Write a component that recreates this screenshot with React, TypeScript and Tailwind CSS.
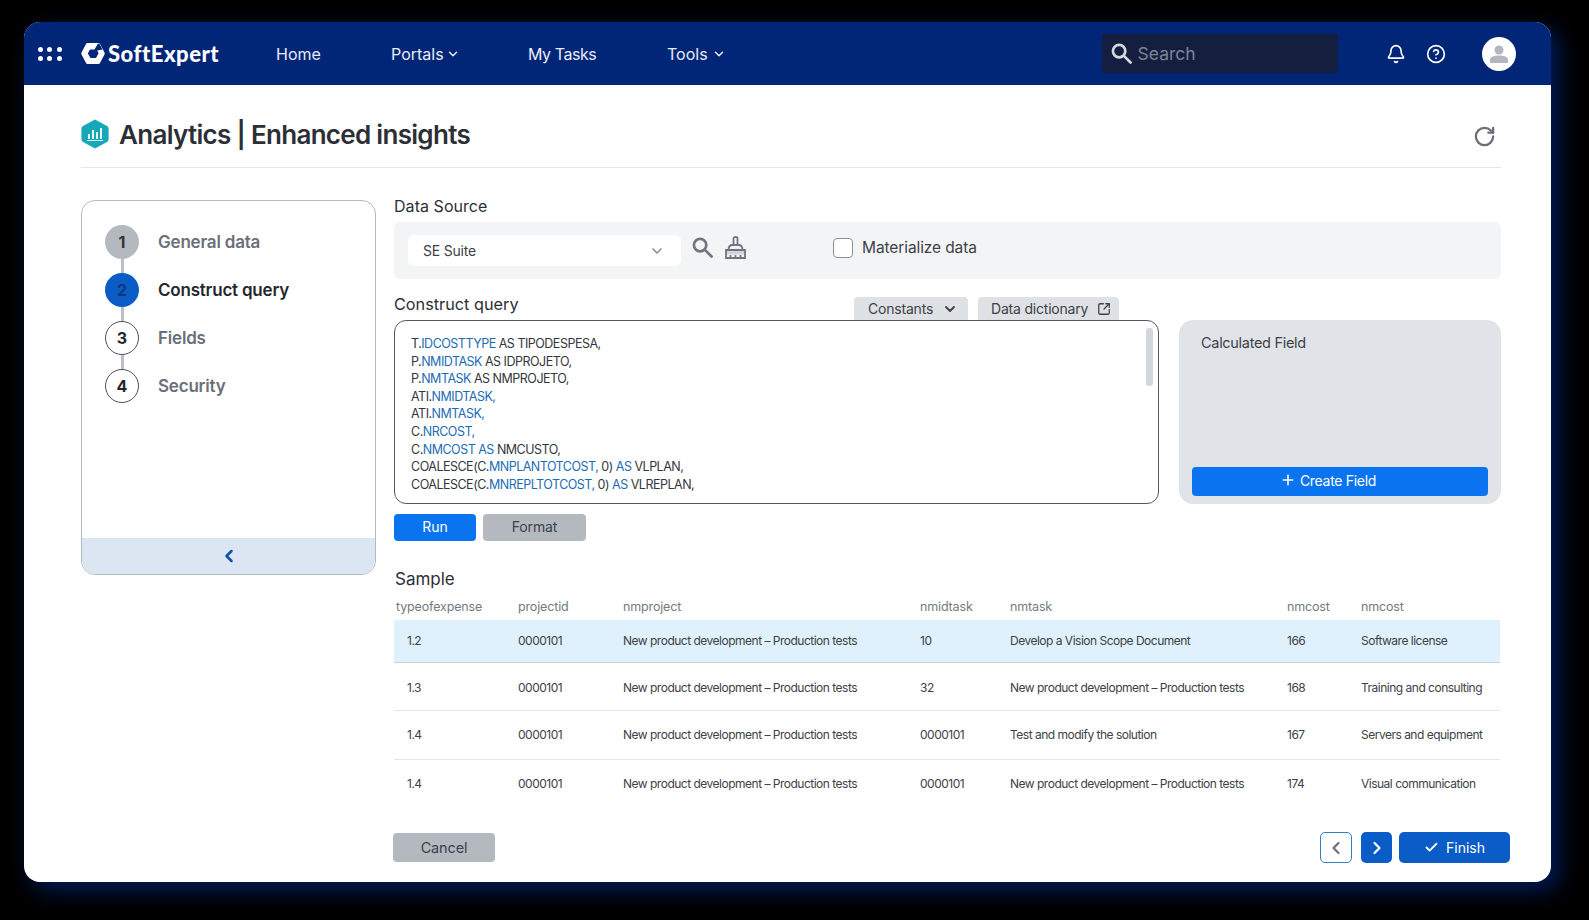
import { Bell, Check, ChevronDown, ChevronLeft, ChevronRight, CircleHelp, Plus, RotateCw, SquareArrowOutUpRight } from "lucide-react";

const steps = [
  { n: "1", label: "General data", circle: "bg-[#b4b9c0] text-[#2f343b]", text: "text-[#6b7078]" },
  { n: "2", label: "Construct query", circle: "bg-[#0a5cc6] text-[#0b3a80]", text: "text-[#24282e]" },
  { n: "3", label: "Fields", circle: "bg-white border border-[#4b5058] text-[#24282e]", text: "text-[#6b7078]" },
  { n: "4", label: "Security", circle: "bg-white border border-[#4b5058] text-[#24282e]", text: "text-[#6b7078]" },
];

const rows = [
  ["1.2", "0000101", "New product development – Production tests", "10", "Develop a Vision Scope Document", "166", "Software license"],
  ["1.3", "0000101", "New product development – Production tests", "32", "New product development – Production tests", "168", "Training and consulting"],
  ["1.4", "0000101", "New product development – Production tests", "0000101", "Test and modify the solution", "167", "Servers and equipment"],
  ["1.4", "0000101", "New product development – Production tests", "0000101", "New product development – Production tests", "174", "Visual communication"],
];

const rowStyles = [
  "h-[43px] bg-[#dff1fc] border-b border-[#c9d3da]",
  "h-[48px] pt-[3px] border-b border-[#e3e5e8]",
  "h-[49px] border-b border-[#e3e5e8]",
  "h-[48px]",
];

const headers = ["typeofexpense", "projectid", "nmproject", "nmidtask", "nmtask", "nmcost", "nmcost"];

const Kw = ({ children }: { children: React.ReactNode }) => <span className="text-[#1c6cb4]">{children}</span>;

const Logo = () => (
  <svg width="24" height="21" viewBox="0 0 24 21">
    <path d="M6.500 0h11q1 0 1.500.9l4.500 8.700q.5.900 0 1.800L19 20.100q-.5.900-1.500.9h-11q-1 0-1.500-.9L.5 11.400q-.5-.9 0-1.800L5 .9Q5.500 0 6.500 0z" fill="#fff" />
    <path d="M9 6.500h4.500l3.500-6 1.500.5 3 5.500-5.200 1 1.200 3-2.500 4.500H9.500L6.800 10.500z" fill="#012577" />
  </svg>
);

const SearchGlyph = ({ size, color }: { size: number; color: string }) => (
  <svg width={size} height={size} viewBox="0 0 22 22" fill="none" stroke={color} strokeWidth="2.800" strokeLinecap="round">
    <circle cx="8.500" cy="8.500" r="6.500" />
    <path d="M13.500 13.500 20.500 20.500" />
  </svg>
);

const AnalyticsIcon = () => (
  <svg width="28" height="30" viewBox="0 0 28 30">
    <path d="M14 0.500 26 7q1.600.9 1.600 2.700v10.600q0 1.800-1.600 2.700l-12 6.500L2 23q-1.600-.9-1.600-2.700V9.700Q.4 7.900 2 7z" fill="#14a8b8" />
    <path d="M7 15h2v5H7zM11 11h2v9h-2zM15 13h2v7h-2zM19 9h2v11h-2z" fill="#fff" opacity="0.9" />
    <path d="M6 21.500h16" stroke="#fff" strokeWidth="1" opacity="0.9" />
  </svg>
);

const Broom = () => (
  <svg width="21" height="24" viewBox="0 0 21 24" fill="none" stroke="#6f767f" strokeWidth="1.800">
    <path d="M8.500 9V2.500q0-1.500 2-1.500t2 1.500V9" />
    <path d="M3.500 14q0-5 4-5h6q4 0 4 5" />
    <path d="M1 14h19v8H1z" />
    <path d="M1 14h19v3.500H1z" fill="#6f767f" opacity="0.25" />
    <path d="M5.500 19v3M10.500 19v3M15.500 19v3" />
  </svg>
);

const Avatar = () => (
  <svg width="20" height="18" viewBox="0 0 20 18" fill="#b3b7bd">
    <circle cx="10" cy="5" r="4.500" />
    <path d="M1 18v-3q0-3 4-4l3-.5h4l3 .5q4 1 4 4v3z" />
  </svg>
);

export default function App() {
  return (
    <div className="min-h-screen bg-black pt-[22px] pl-[24px] font-['Inter',sans-serif]">
      <div className="w-[1527px] h-[860px] bg-white rounded-2xl overflow-hidden shadow-[8px_8px_22px_rgba(0,40,130,0.7)] flex flex-col">
        {/* top bar */}
        <header className="h-[63px] shrink-0 bg-[#012577] flex items-center text-white">
          <div className="ml-[14px] w-[24px] grid grid-cols-3 gap-x-[4px] gap-y-[4px]">
            {[0, 1, 2, 3, 4, 5].map((i) => (
              <span key={i} className="w-[5px] h-[5px] rounded-full bg-white" />
            ))}
          </div>
          <div className="ml-[19px] flex items-center gap-[3px] w-[195px]">
            <Logo />
            <span className="font-['Lato',sans-serif] font-black text-[22px] leading-[22px] tracking-[0.5px]">SoftExpert</span>
          </div>
          <nav className="flex items-center text-[16px] text-[#e8edf7]">
            <span className="w-[115px]">Home</span>
            <span className="w-[137px] flex items-center gap-[2px]">Portals <ChevronDown size={14} strokeWidth={2.5} /></span>
            <span className="w-[139px] tracking-[-0.45px]">My Tasks</span>
            <span className="flex items-center gap-[4px]">Tools <ChevronDown size={14} strokeWidth={2.5} /></span>
          </nav>
          <div className="ml-[376px] w-[236px] h-[39px] rounded-[3px] bg-[#141f3f] flex items-center pl-[9px] gap-[6px]">
            <SearchGlyph size={21} color="#d4d7de" />
            <span className="mt-[2px] text-[17.500px] text-[#7c8396]">Search</span>
          </div>
          <Bell size={20} strokeWidth={2} className="ml-[48px]" />
          <CircleHelp size={20} strokeWidth={2} className="ml-[20px]" />
          <div className="ml-[36px] w-[34px] h-[34px] rounded-full bg-white flex items-center justify-center">
            <Avatar />
          </div>
        </header>

        <div className="flex-1 flex flex-col pl-[57px] pr-[50px]">
          {/* page title */}
          <div className="h-[83px] pt-[16px] shrink-0 border-b border-[#e5e7ea] flex items-center pr-[5px]">
            <AnalyticsIcon />
            <h1 className="ml-[10px] text-[26px] font-semibold text-[#2c2f35] tracking-[-0.7px]">Analytics | Enhanced insights</h1>
            <RotateCw size={23} strokeWidth={2.400} className="ml-auto mt-[4px] text-[#6b7078]" />
          </div>

          <div className="flex mt-[32px] gap-[18px]">
            {/* wizard steps */}
            <aside className="w-[295px] h-[375px] shrink-0 rounded-[14px] border border-[#b4b9c0] overflow-hidden flex flex-col">
              <div className="flex-1 pt-[24px] pl-[23px]">
                {steps.map((s, i) => (
                  <div key={s.n} className="flex flex-col">
                    <div className="flex items-center">
                      <div className={`w-[34px] h-[34px] rounded-full flex items-center justify-center text-[16px] font-bold ${s.circle}`}>{s.n}</div>
                      <span className={`ml-[19px] mt-[1px] text-[17px] font-semibold tracking-[-0.2px] ${s.text}`}>{s.label}</span>
                    </div>
                    {i < 3 && <div className="ml-[15.500px] w-[3px] h-[14px] bg-[#bcc0c6]" />}
                  </div>
                ))}
              </div>
              <div className="h-[36px] bg-[#dce6f2] flex items-center justify-center">
                <ChevronLeft size={20} strokeWidth={3} className="text-[#0a52ad]" />
              </div>
            </aside>

            <main className="flex-1 min-w-0">
              <h2 className="text-[16px] leading-[20px] -mt-[4px] tracking-[0.05px] text-[#2c2f35]">Data Source</h2>
              <div className="mt-[6px] h-[57px] rounded-[6px] bg-[#f3f4f6] flex items-center pl-[14px]">
                <div className="w-[273px] h-[31px] rounded-[6px] bg-white flex items-center justify-between pl-[15px] pr-[16px] text-[14px] text-[#3d4148] tracking-[-0.2px]">
                  SE Suite
                  <ChevronDown size={16} strokeWidth={2.500} className="text-[#8a9098]" />
                </div>
                <span className="ml-[11px] -mt-[7px] flex"><SearchGlyph size={21} color="#6f767f" /></span>
                <span className="ml-[12px] -mt-[6px] flex"><Broom /></span>
                <span className="ml-[87px] -mt-[5px] w-[20px] h-[20px] rounded-[4px] border border-[#8a9098] bg-white" />
                <span className="ml-[9px] -mt-[6px] text-[15.500px] tracking-[-0.1px] text-[#3d4148]">Materialize data</span>
              </div>

              <div className="mt-[18px] h-[23px] flex items-end">
                <h2 className="text-[16.250px] leading-[20px] text-[#2c2f35] self-start -mt-[3px]">Construct query</h2>
                <div className="ml-auto mr-[382px] flex gap-[10px] text-[14px] text-[#3d4148] tracking-[-0.2px]">
                  <span className="w-[114px] h-[23px] rounded-t-[4px] bg-[#dfe2e5] flex items-center justify-between pl-[14px] pr-[10px]">
                    Constants <ChevronDown size={16} strokeWidth={2.800} />
                  </span>
                  <span className="w-[141px] h-[23px] rounded-t-[4px] bg-[#dfe2e5] flex items-center justify-between pl-[13px] pr-[8px]">
                    Data dictionary <SquareArrowOutUpRight size={14} strokeWidth={2.200} />
                  </span>
                </div>
              </div>

              <div className="flex gap-[20px]">
                <div className="relative w-[765px] h-[184px] rounded-[12px] border border-[#55595f] pt-[14px] pl-[16px] text-[12.500px] leading-[17.600px] text-[#33373d] tracking-[-0.5px]">
                  <div>T.<Kw>IDCOSTTYPE</Kw> AS TIPODESPESA,</div>
                  <div>P.<Kw>NMIDTASK</Kw> AS IDPROJETO,</div>
                  <div>P.<Kw>NMTASK</Kw> AS NMPROJETO,</div>
                  <div>ATI.<Kw>NMIDTASK,</Kw></div>
                  <div>ATI.<Kw>NMTASK,</Kw></div>
                  <div>C.<Kw>NRCOST,</Kw></div>
                  <div>C.<Kw>NMCOST AS</Kw> NMCUSTO,</div>
                  <div>COALESCE(C.<Kw>MNPLANTOTCOST,</Kw> 0) <Kw>AS</Kw> VLPLAN,</div>
                  <div>COALESCE(C.<Kw>MNREPLTOTCOST,</Kw> 0) <Kw>AS</Kw> VLREPLAN,</div>
                  <span className="absolute top-[7px] right-[5px] w-[7px] h-[58px] rounded-[3px] bg-[#d3d6da]" />
                </div>
                <div className="flex-1 h-[184px] rounded-[14px] bg-[#e0e4e8] flex flex-col px-[13px] pb-[8px]">
                  <span className="mt-[12px] ml-[9px] text-[14.500px] text-[#3d4148] tracking-[-0.3px]">Calculated Field</span>
                  <button className="mt-auto h-[29px] pr-[24px] pb-[3px] rounded-[4px] bg-[#0a74f0] text-white text-[14px] tracking-[-0.3px] flex items-center justify-center gap-[4px]">
                    <Plus size={16} strokeWidth={2.400} /> Create Field
                  </button>
                </div>
              </div>

              <div className="mt-[10px] flex gap-[7px] text-[14px] tracking-[-0.1px]">
                <button className="w-[82px] h-[27px] pb-[3px] rounded-[4px] bg-[#0a74f0] text-white">Run</button>
                <button className="w-[103px] h-[27px] pb-[3px] rounded-[4px] bg-[#b4b9c0] text-[#3d4148]">Format</button>
              </div>

              <h2 className="mt-[27px] text-[17px] leading-[22px] text-[#2c2f35] pl-[1px]">Sample</h2>

              <div className="mt-[7px] w-[1106px] text-[12px] tracking-[-0.5px] text-[#3d4148]">
                <div className="grid grid-cols-[124px_105px_297px_90px_277px_74px_139px] h-[23px] pb-[3px] items-center text-[#747a82] text-[12.500px] tracking-[-0.15px]">
                  {headers.map((h, i) => (
                    <span key={i} className={i === 0 ? "pl-[2px]" : ""}>{h}</span>
                  ))}
                </div>
                {rows.map((r, i) => (
                  <div key={i} className={`grid grid-cols-[124px_105px_297px_90px_277px_74px_139px] items-center ${rowStyles[i]}`}>
                    {r.map((c, j) => (
                      <span key={j} className={j === 0 ? "pl-[13px]" : ""}>{c}</span>
                    ))}
                  </div>
                ))}
              </div>
            </main>
          </div>

          {/* footer actions */}
          <div className="mt-auto mb-[19px] ml-[312px] -mr-[9px] flex items-center">
            <button className="w-[102px] h-[29px] rounded-[4px] bg-[#b4b9c0] text-[#3d4148] text-[14.500px] tracking-[-0.15px]">Cancel</button>
            <button className="ml-auto w-[32px] h-[31px] rounded-[5px] border border-[#2f7fc8] bg-white flex items-center justify-center">
              <ChevronLeft size={20} strokeWidth={2.600} className="text-[#6b7078]" />
            </button>
            <button className="ml-[9px] w-[31px] h-[31px] rounded-[5px] bg-[#0a5cc6] flex items-center justify-center">
              <ChevronRight size={20} strokeWidth={2.600} className="text-white" />
            </button>
            <button className="ml-[7px] w-[111px] h-[31px] rounded-[5px] bg-[#0a5cc6] text-white text-[14px] flex items-center justify-center gap-[7px]">
              <Check size={15} strokeWidth={3} /> Finish
            </button>
          </div>
        </div>
      </div>
    </div>
  );
}
